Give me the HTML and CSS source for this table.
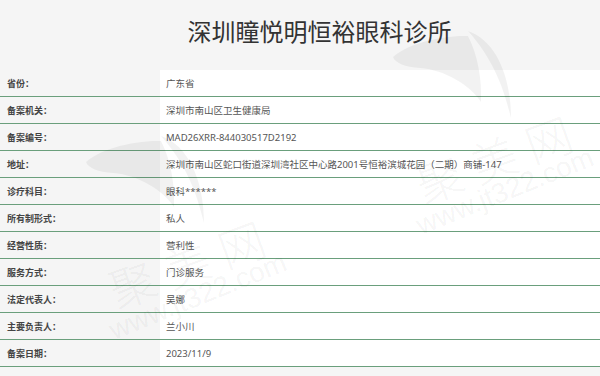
FILE: index.html
```html
<!DOCTYPE html>
<html lang="zh-CN">
<head>
<meta charset="utf-8">
<title>深圳瞳悦明恒裕眼科诊所</title>
<link rel="stylesheet" href="styles.css">
</head>
<body>
<div class="page">
  <header class="header">
    <h1 class="title">深圳瞳悦明恒裕眼科诊所</h1>
  </header>
  <div class="table">
    <div class="row"><div class="label">省份：</div><div class="value">广东省</div></div>
    <div class="row"><div class="label">备案机关：</div><div class="value">深圳市南山区卫生健康局</div></div>
    <div class="row"><div class="label">备案编号：</div><div class="value">MAD26XRR-844030517D2192</div></div>
    <div class="row"><div class="label">地址：</div><div class="value">深圳市南山区蛇口街道深圳湾社区中心路2001号恒裕滨城花园（二期）商铺-147</div></div>
    <div class="row"><div class="label">诊疗科目：</div><div class="value">眼科******</div></div>
    <div class="row"><div class="label">所有制形式：</div><div class="value">私人</div></div>
    <div class="row"><div class="label">经营性质：</div><div class="value">营利性</div></div>
    <div class="row"><div class="label">服务方式：</div><div class="value">门诊服务</div></div>
    <div class="row"><div class="label">法定代表人：</div><div class="value">吴娜</div></div>
    <div class="row"><div class="label">主要负责人：</div><div class="value">兰小川</div></div>
    <div class="row"><div class="label">备案日期：</div><div class="value">2023/11/9</div></div>
  </div>
  <svg class="watermark" width="600" height="376" viewBox="0 0 600 376" aria-hidden="true">
    <g class="wm-tile">
      <path d="M393,57 C405,45 440,35 468,36 C478,55 482,80 481,102 C470,85 445,70 420,68 C405,67 395,63 393,57 Z"/>
      <path d="M468,31 C495,40 511,75 511,118 C503,85 492,58 468,31 Z"/>
      <text class="wm-cn" x="424" y="204" transform="rotate(-20 424 204)">聚美网</text>
      <text class="wm-en" x="421" y="235" transform="rotate(-22 421 235)">www.jt322.com</text>
    </g>
    <g class="wm-tile" transform="translate(-307,105)">
      <path d="M393,57 C405,45 440,35 468,36 C478,55 482,80 481,102 C470,85 445,70 420,68 C405,67 395,63 393,57 Z"/>
      <path d="M468,31 C495,40 511,75 511,118 C503,85 492,58 468,31 Z"/>
      <text class="wm-cn" x="424" y="204" transform="rotate(-20 424 204)">聚美网</text>
      <text class="wm-en" x="421" y="235" transform="rotate(-22 421 235)">www.jt322.com</text>
    </g>
  </svg>
</div>
</body>
</html>
```

FILE: styles.css
```css
html, body {
  margin: 0;
  padding: 0;
}
body {
  background: #f5f5f5;
  font-family: "Noto Sans", "Noto Sans CJK SC", sans-serif;
}
.page {
  position: relative;
  width: 600px;
  height: 376px;
  overflow: hidden;
  background: #f5f5f5;
}
.header {
  height: 70px;
  display: flex;
  align-items: center;
  justify-content: center;
  padding-left: 39px;
  padding-bottom: 8px;
  box-sizing: border-box;
}
.title {
  margin: 0;
  font-family: "Noto Sans CJK SC", sans-serif;
  font-weight: 400;
  font-size: 24px;
  line-height: 1;
  color: #333333;
}
.table {
  display: flex;
  flex-direction: column;
}
.row {
  display: flex;
  height: 27px;
  box-sizing: border-box;
  border-bottom: 1px solid #6a9f7c;
}
.label {
  width: 160px;
  flex: none;
  box-sizing: border-box;
  padding-left: 7px;
  display: flex;
  align-items: center;
  font-size: 9px;
  font-weight: 700;
  color: #444444;
}
.value {
  flex: 1;
  background: #ffffff;
  padding-left: 6px;
  display: flex;
  align-items: center;
  font-size: 9.5px;
  color: #555555;
  white-space: nowrap;
}
.watermark {
  position: absolute;
  left: 0;
  top: 0;
  pointer-events: none;
}
.wm-tile path {
  fill: rgba(0, 0, 0, 0.05);
}
.wm-cn {
  font-family: "Noto Sans CJK SC", sans-serif;
  font-size: 46px;
  font-weight: 300;
  letter-spacing: 12px;
  fill: rgba(0, 0, 0, 0.055);
}
.wm-en {
  font-family: "Liberation Sans", sans-serif;
  font-size: 28px;
  fill: rgba(0, 0, 0, 0.055);
}
```
